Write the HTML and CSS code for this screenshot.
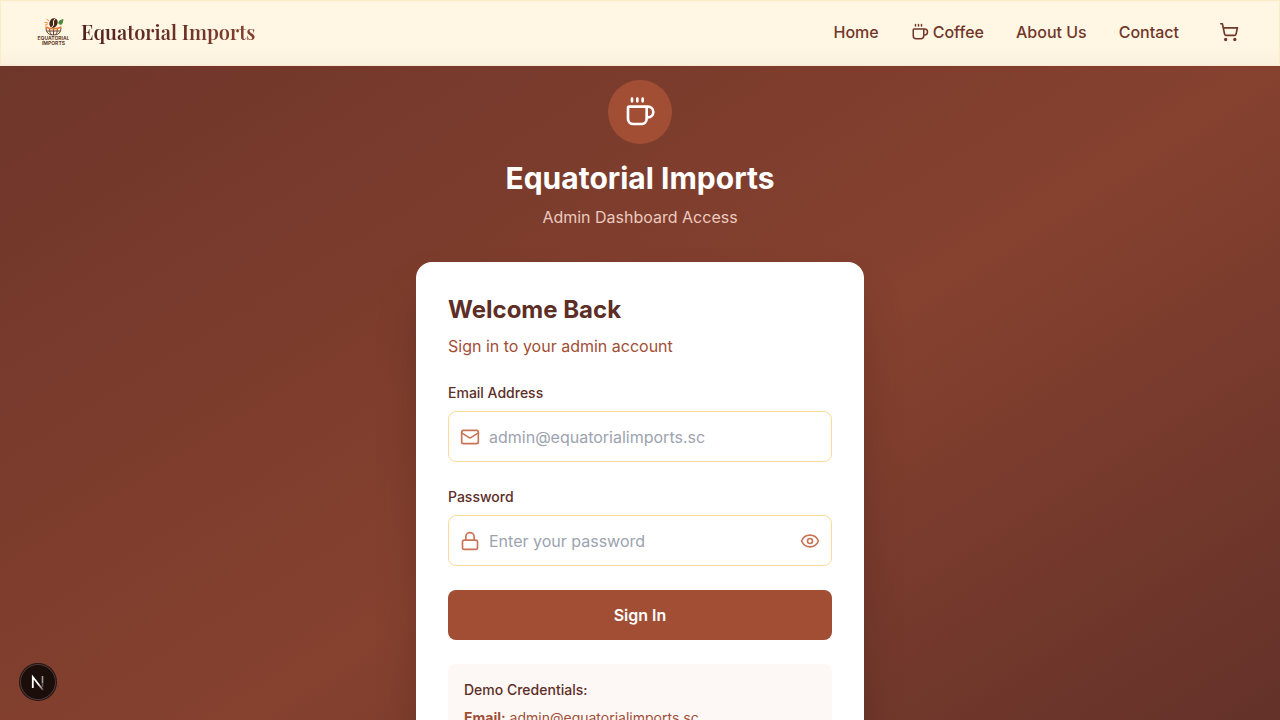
FILE: index.html
```html
<!DOCTYPE html>
<html lang="en">
<head>
<meta charset="utf-8">
<meta name="viewport" content="width=device-width, initial-scale=1">
<title>Equatorial Imports Admin</title>
<link rel="stylesheet" href="styles.css">
</head>
<body>
<svg class="sprite" aria-hidden="true">
  <symbol id="coffee" viewBox="0 0 24 24"><path d="M10 2v2M14 2v2M6 2v2M16 8a1 1 0 0 1 1 1v8a4 4 0 0 1-4 4H7a4 4 0 0 1-4-4V9a1 1 0 0 1 1-1h14a4 4 0 1 1 0 8h-1"/></symbol>
</svg>
<header class="site-header">
  <a class="brand" href="#">
    <svg class="brand-logo" viewBox="0 0 32 32" aria-hidden="true">
      <path class="globe" d="M9 12q0 7 7.500 7t7.500-7M10 15h13M16.500 12v7M12.500 12q0 5 2 7M20.500 12q0 5-2 7"/>
      <path class="band" d="M8.500 10q8 4 16 0v2q-8 3-16 0z"/>
      <ellipse class="bean" cx="16.500" cy="7" rx="4" ry="5" transform="rotate(25 16.500 7)"/>
      <path class="bean-line" d="M18.500 2.500q-3 2.500-2 4.500t-2 4.500"/>
      <path class="leaf" d="M21.500 8q-1-4 5-5 0 4-2.500 6z"/>
      <path class="spark" d="M11 7L7.500 6.500M12 5L9.500 3M10.500 8.500L8 9"/>
      <text class="logo-name" x="16.500" y="24" text-anchor="middle">EQUATORIAL</text>
      <text class="logo-sub" x="16.500" y="29" text-anchor="middle">IMPORTS</text>
    </svg>
    <span class="brand-name">Equatorial Imports</span>
  </a>
  <nav class="site-nav">
    <a href="#">Home</a>
    <a class="nav-coffee" href="#"><svg class="icon icon-sm" aria-hidden="true"><use href="#coffee"/></svg>Coffee</a>
    <a href="#">About Us</a>
    <a href="#">Contact</a>
    <button class="cart" type="button" aria-label="Cart"><svg class="icon icon-md" viewBox="0 0 24 24"><circle cx="8" cy="21" r="1"/><circle cx="19" cy="21" r="1"/><path d="M2.05 2.05h2l2.66 12.42a2 2 0 0 0 2 1.58h9.78a2 2 0 0 0 1.95-1.57l1.65-7.43H5.12"/></svg></button>
  </nav>
</header>
<main class="page">
  <div class="login">
    <div class="intro">
      <div class="badge"><svg class="icon icon-lg" aria-hidden="true"><use href="#coffee"/></svg></div>
      <h1>Equatorial Imports</h1>
      <p>Admin Dashboard Access</p>
    </div>
    <section class="card">
      <h2>Welcome Back</h2>
      <p class="lead">Sign in to your admin account</p>
      <form>
        <label for="email">Email Address</label>
        <div class="field">
          <svg class="icon icon-md" viewBox="0 0 24 24" aria-hidden="true"><rect x="2" y="4" width="20" height="16" rx="2"/><path d="m22 7-8.97 5.7a1.94 1.94 0 0 1-2.06 0L2 7"/></svg>
          <input id="email" type="email" placeholder="admin@equatorialimports.sc">
        </div>
        <label for="password">Password</label>
        <div class="field">
          <svg class="icon icon-md" viewBox="0 0 24 24" aria-hidden="true"><rect x="3" y="11" width="18" height="11" rx="2"/><path d="M7 11V7a5 5 0 0 1 10 0v4"/></svg>
          <input id="password" type="password" placeholder="Enter your password">
          <button class="reveal" type="button" aria-label="Show password"><svg class="icon icon-md" viewBox="0 0 24 24"><path d="M2.06 12.35a1 1 0 0 1 0-.7 10.75 10.75 0 0 1 19.88 0 1 1 0 0 1 0 .7 10.75 10.75 0 0 1-19.88 0"/><circle cx="12" cy="12" r="3"/></svg></button>
        </div>
        <button class="submit" type="submit">Sign In</button>
      </form>
      <div class="demo">
        <h3>Demo Credentials:</h3>
        <p><strong>Email:</strong> admin@equatorialimports.sc</p>
      </div>
    </section>
  </div>
</main>
<button class="dev-badge" type="button" aria-label="Developer tools">
  <svg viewBox="0 0 36 36" aria-hidden="true">
    <defs>
      <linearGradient id="fade-diag" x1="19" y1="20" x2="24" y2="27" gradientUnits="userSpaceOnUse"><stop offset="0" stop-color="#fff"/><stop offset="1" stop-color="#fff" stop-opacity=".1"/></linearGradient>
    </defs>
    <path d="M12.800 24V13L23 26" fill="none" stroke="url(#fade-diag)" stroke-width="1.800"/>
    <path d="M22.500 12v7" fill="none" stroke="#fff" stroke-opacity=".6" stroke-width="1.600"/>
    <path d="M22.500 19v4" fill="none" stroke="#fff" stroke-opacity=".3" stroke-width="1.600"/>
  </svg>
</button>
</body>
</html>
```
FILE: styles.css
```css
*, *::before, *::after { box-sizing: border-box; }
html { scrollbar-width: none; }
body {
  margin: 0;
  font-family: Inter, "Liberation Sans", sans-serif;
  font-size: 16px;
  line-height: 24px;
  color: #5c2e26;
}
h1, h2, h3, p { margin: 0; }
button, input { font: inherit; }
button { border: 0; padding: 0; background: none; cursor: pointer; }
a { color: inherit; text-decoration: none; }
.sprite { position: absolute; width: 0; height: 0; }

.icon {
  display: block;
  flex: none;
  fill: none;
  stroke: currentColor;
  stroke-width: 2;
  stroke-linecap: round;
  stroke-linejoin: round;
}
.icon-sm { width: 18px; height: 18px; }
.icon-md { width: 20px; height: 20px; }
.icon-lg { width: 32px; height: 32px; }

.site-header {
  position: sticky;
  top: 0;
  z-index: 2;
  display: flex;
  align-items: center;
  justify-content: space-between;
  height: 66px;
  padding: 0 32px 2px 36px;
  border: 1px solid #fdebc8;
  border-bottom-color: #f5e9d0;
  background: linear-gradient(#fff6e3 70%, #f9f0dd);
}
.brand { display: flex; align-items: center; gap: 12px; }
.brand-logo { width: 32px; height: 32px; }
.globe { fill: none; stroke: #6b4a35; stroke-width: 1; }
.band { fill: #f08035; }
.bean { fill: #4a2818; }
.bean-line { fill: none; stroke: #fff6e3; stroke-width: 1; }
.leaf { fill: #4c8a3c; }
.spark { fill: none; stroke: #f08a45; stroke-width: 1; }
.logo-name, .logo-sub { font-weight: 700; fill: #5f402b; }
.logo-name { font-size: 5px; }
.logo-sub { font-size: 5px; }
.brand-name {
  font-family: "Playfair Display", "Liberation Serif", serif;
  font-size: 20px;
  font-weight: 600;
  line-height: 28px;
  color: transparent;
  background: linear-gradient(90deg, #4f211c, #84402f);
  -webkit-background-clip: text;
  background-clip: text;
}
.site-nav {
  display: flex;
  align-items: center;
  gap: 32px;
  font-weight: 500;
  color: #71372b;
}
.nav-coffee { display: flex; align-items: center; gap: 4px; }
.cart { padding: 8px; color: #71372b; }

.page {
  display: flex;
  justify-content: center;
  min-height: 100vh;
  padding: 14px 16px 32px;
  background: linear-gradient(to bottom right, #6f362a, #86412f 50%, #5c2e28);
}
.login { width: 100%; max-width: 448px; }
.intro { text-align: center; margin-bottom: 32px; }
.intro h1 {
  margin-bottom: 8px;
  font-size: 30px;
  font-weight: 700;
  line-height: 36px;
  color: #fff;
}
.intro p { line-height: 26px; color: #eccabf; }
.badge {
  display: grid;
  place-items: center;
  width: 64px;
  height: 64px;
  margin: 0 auto 16px;
  border-radius: 50%;
  background: #a14e35;
  color: #fff;
}
.card {
  padding: 32px;
  border-radius: 16px;
  background: #fff;
  box-shadow: 0 25px 50px -12px rgba(0, 0, 0, .25);
}
.card h2 {
  margin-bottom: 8px;
  font-size: 24px;
  font-weight: 700;
  line-height: 32px;
}
.lead { margin-bottom: 25px; color: #a14e35; }
.card label {
  display: block;
  margin-bottom: 8px;
  font-size: 14px;
  font-weight: 500;
  line-height: 20px;
}
.field {
  display: flex;
  align-items: center;
  gap: 9px;
  margin-bottom: 24px;
  padding: 0 11px;
  border: 1px solid #f9dc98;
  border-radius: 8px;
  color: #c97456;
}
.field + label { margin-top: 25px; }
.field input {
  flex: 1;
  min-width: 0;
  height: 49px;
  padding: 0;
  border: 0;
  outline: 0;
  background: transparent;
  color: #5c2e26;
}
.field input::placeholder { color: #9ca3af; opacity: 1; }
.reveal { color: #c97456; }
.submit {
  display: block;
  width: 100%;
  padding: 13px 16px;
  border-radius: 8px;
  background: #a14e35;
  color: #fff;
  font-weight: 600;
}
.demo {
  margin-top: 24px;
  padding: 16px;
  border-radius: 8px;
  background: #fdf7f5;
  font-size: 14px;
  line-height: 20px;
}
.demo h3 {
  margin-bottom: 8px;
  font-size: 14px;
  font-weight: 500;
}
.demo p { padding-bottom: 64px; color: #a14e35; }

.dev-badge {
  position: fixed;
  bottom: 20px;
  left: 20px;
  z-index: 3;
  width: 36px;
  height: 36px;
  border-radius: 50%;
  background: #1b0d0a;
  box-shadow: inset 0 0 0 1px #4b3a37, 0 0 0 1px #241512;
}
.dev-badge svg { display: block; width: 36px; height: 36px; }
```
